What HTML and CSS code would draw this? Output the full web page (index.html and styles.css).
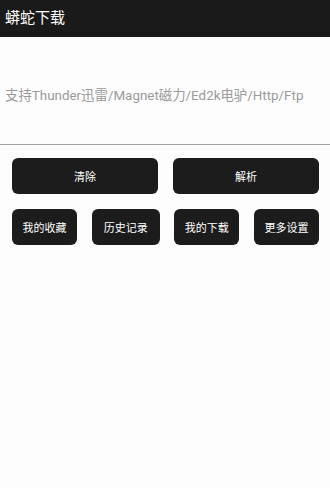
FILE: index.html
```html
<!DOCTYPE html>
<html>
<head>
<meta name="viewport" content="width=device-width, initial-scale=1">
<link rel="stylesheet" href="styles.css">
</head>
<body>
  <div class="topbar">蟒蛇下载</div>

  <div class="input-area">
    <input type="text" class="link-input" placeholder="支持Thunder迅雷/Magnet磁力/Ed2k电驴/Http/Ftp">
  </div>

  <div class="row two">
    <button class="btn">清除</button>
    <button class="btn">解析</button>
  </div>
  <div class="row four">
    <button class="btn">我的收藏</button>
    <button class="btn">历史记录</button>
    <button class="btn">我的下载</button>
    <button class="btn">更多设置</button>
  </div>
</body>
</html>
```

FILE: styles.css
```css
* {
  box-sizing: border-box;
}

body {
  margin: 0;
  background-color: #fdfdfd;
  font-family: Roboto, "Noto Sans CJK SC", sans-serif;
}

.topbar {
  height: 37px;
  background-color: #1a1a1a;
  color: #ffffff;
  font-size: 15px;
  line-height: 37px;
  padding-left: 5px;
}

.input-area {
  height: 108px;
  padding-top: 10px;
  border-bottom: 1px solid #a0a0a0;
  display: flex;
  align-items: center;
}

.link-input {
  width: 100%;
  border: none;
  background: transparent;
  padding: 0 5px;
  font-family: Roboto, "Noto Sans CJK SC", sans-serif;
  font-size: 13.4px;
  outline: none;
}

.link-input::placeholder {
  color: #9a9a9a;
}

.row {
  display: grid;
  padding: 0 11px 0 12px;
}

.row.two {
  grid-template-columns: 146px 146px;
  justify-content: space-between;
  margin-top: 13px;
}

.row.four {
  grid-template-columns: 65px 68px 65px 65px;
  justify-content: space-between;
  margin-top: 15px;
}

.btn {
  height: 36px;
  border: none;
  border-radius: 6px;
  background-color: #1c1c1c;
  color: #ffffff;
  font-family: Roboto, "Noto Sans CJK SC", sans-serif;
  font-size: 11px;
  padding: 0;
}
```
